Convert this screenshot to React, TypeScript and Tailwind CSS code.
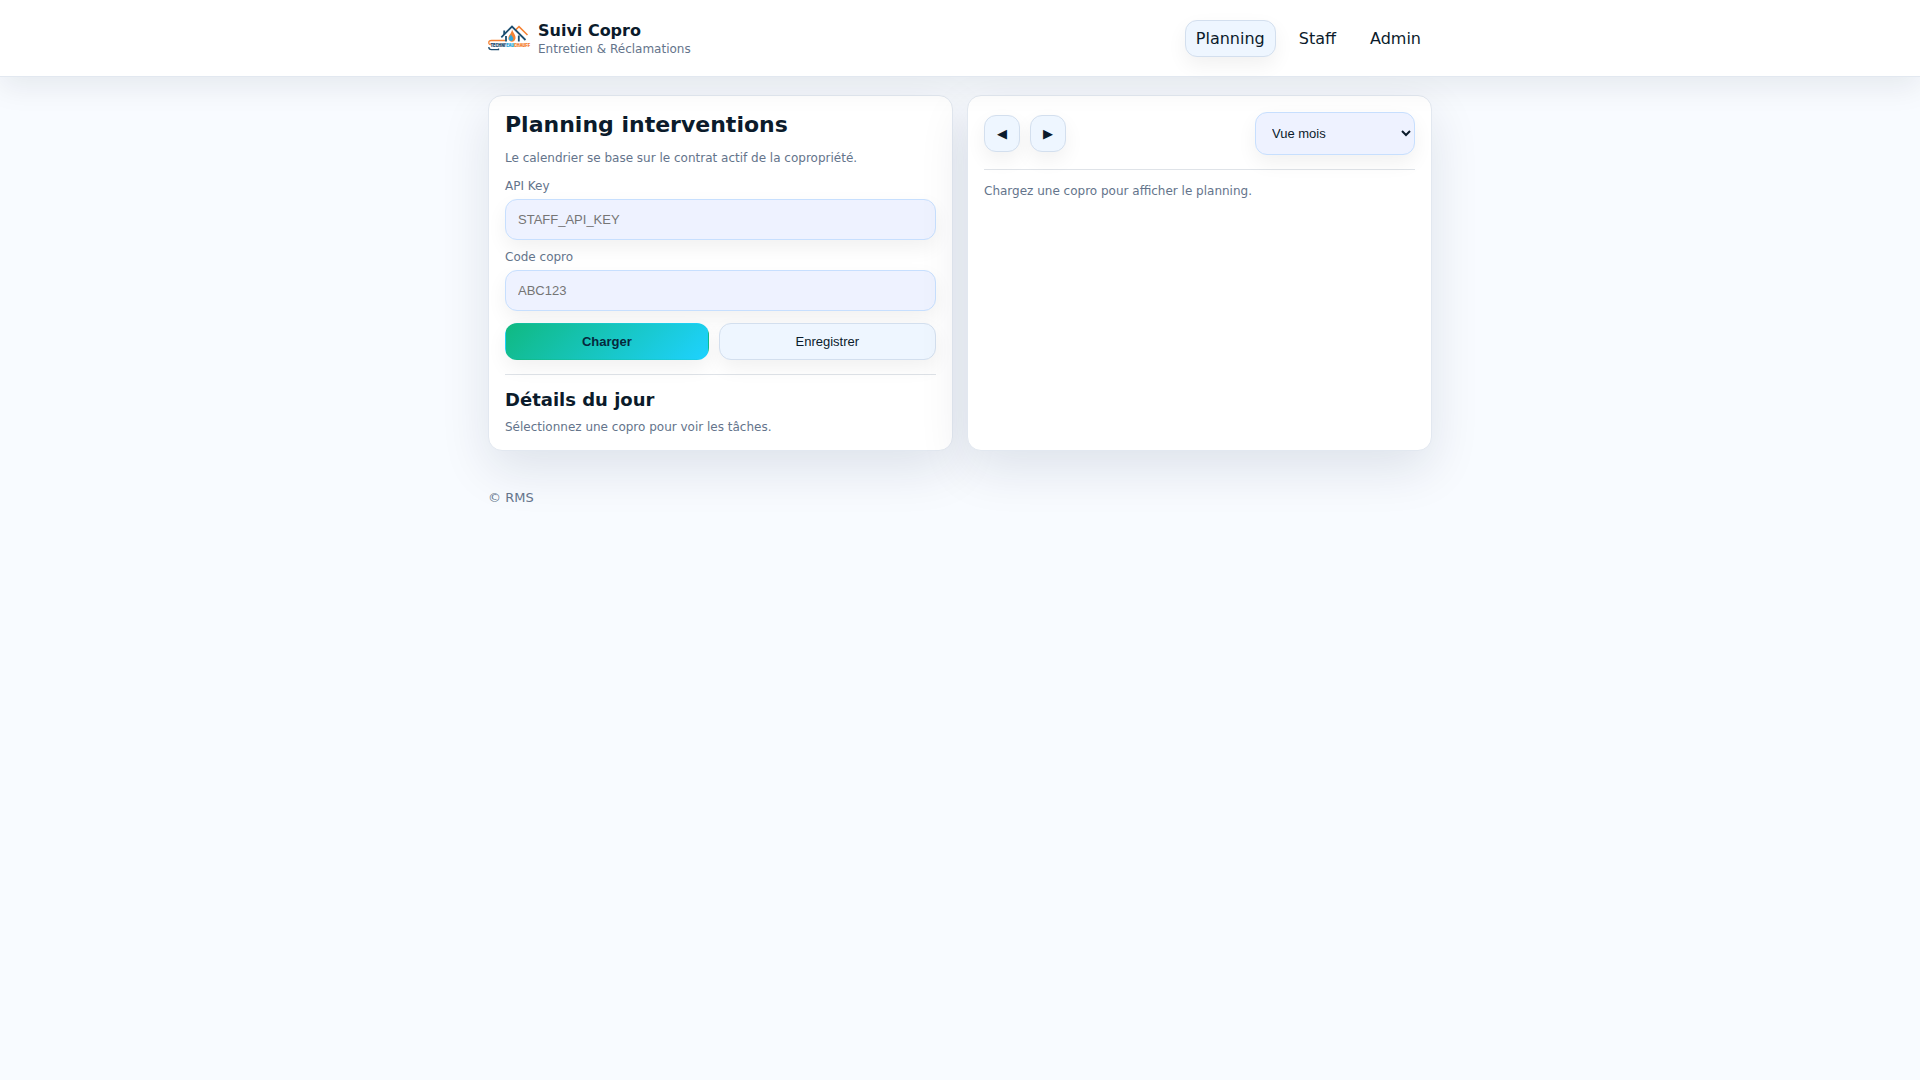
import { useState } from 'react';
import type { ReactNode } from 'react';

type View = 'month' | 'week' | 'day';

const NAV_ITEMS = [
  { label: 'Planning', href: '#planning', active: true },
  { label: 'Staff', href: '#staff', active: false },
  { label: 'Admin', href: '#admin', active: false },
];

const CONTROL =
  "rounded-xl border border-[#c7dffe] bg-[#eef2ff] px-3 font-['Liberation_Sans',sans-serif] text-[13px] shadow-[0_8px_20px_rgba(2,6,23,0.06)]";

const BUTTON =
  "h-[37px] cursor-pointer rounded-xl border px-3 font-['Liberation_Sans',sans-serif] text-[13px] shadow-[0_8px_20px_rgba(2,6,23,0.06)]";

function Logo() {
  return (
    <svg viewBox="0 0 40 40" className="h-10 w-10 overflow-visible" role="img" aria-label="Techni'eau Chauff">
      <g fill="none" strokeLinejoin="miter">
        <path d="M27.5 12 31 8.600l8.500 8.400" stroke="#f58233" strokeWidth="1.500" />
        <path d="M13.300 19.300 24 8.600 37.500 22" stroke="#1d4e70" strokeWidth="1.800" />
        <path d="M16.200 12.500v4M18 18v5.500M30.800 17.500v6" stroke="#1d4e70" strokeWidth="1.800" />
        <path d="M17 22.500H3.500Q.8 22.500.8 24.600t2 2" stroke="#f58233" strokeWidth="1.300" />
        <path d="M.8 29Q.8 31.600 3.500 31.600H10.500V30.500" stroke="#1d4e70" strokeWidth="1.300" />
      </g>
      <path d="M24 11.500c1 3 4 5.500 3.500 9-.4 2-1.900 3.300-3.500 3.300s-3.700-1.300-3.600-3.800c.1-2.900 3.300-4.500 3.600-8.500z" fill="#f58233" />
      <path d="M23 16c.4 2.400 2.700 3 2.200 5.200-.3 1.200-1.200 1.800-2.200 1.800s-2.300-.9-2.200-2.500c.1-1.700 1.900-2.500 2.200-4.500z" fill="#32a9dc" />
      <text
        x="2.500"
        y="29.300"
        fontFamily="'Liberation Sans Narrow', 'Roboto Condensed', 'Liberation Sans', sans-serif"
        fontWeight="bold"
        fontSize="4.800"
        strokeWidth="0.200"
      >
        <tspan fill="#1d4e70" stroke="#1d4e70">TECHNI'</tspan>
        <tspan fill="#32a9dc" stroke="#32a9dc">EAU</tspan>
        <tspan fill="#f58233" stroke="#f58233">CHAUFF</tspan>
      </text>
    </svg>
  );
}

function Card({ children }: { children: ReactNode }) {
  return (
    <section className="rounded-[14px] border border-[#e2e8f0] bg-white p-4 shadow-[0_18px_50px_rgba(2,24,60,0.11)]">
      {children}
    </section>
  );
}

export default function App() {
  const [apiKey, setApiKey] = useState('');
  const [code, setCode] = useState('');
  const [view, setView] = useState<View>('month');

  return (
    <div className="min-h-screen bg-[#f8fbff] font-['DejaVu_Sans',sans-serif] text-base text-[#0b1b2b]">
      <header className="sticky top-0 z-10 border-b border-[#e2e8f0] bg-white shadow-[0_10px_30px_rgba(15,23,42,0.08)]">
        <div className="mx-auto flex max-w-[980px] items-center justify-between p-[18px]">
          <div className="flex items-center gap-2.5">
            <Logo />
            <div className="flex flex-col gap-0.5">
              <div className="leading-[19px] font-bold">Suivi Copro</div>
              <div className="text-xs leading-[14px] text-[#64748b]">Entretien &amp; Réclamations</div>
            </div>
          </div>

          <nav className="flex gap-3">
            {NAV_ITEMS.map((item) => (
              <a
                key={item.label}
                href={item.href}
                className={`rounded-xl border px-2.5 py-2 leading-[19px] ${
                  item.active
                    ? 'border-[#d3dfee] bg-[#eef6ff] shadow-[0_8px_20px_rgba(2,6,23,0.06)]'
                    : 'border-transparent'
                }`}
              >
                {item.label}
              </a>
            ))}
          </nav>
        </div>
      </header>

      <main className="mx-auto grid max-w-[980px] grid-cols-1 gap-3.5 p-[18px] md:grid-cols-2">
        <Card>
          <h1 className="text-[22px] leading-[26px] font-bold">Planning interventions</h1>
          <p className="mt-[13px] text-xs leading-[14px] text-[#64748b]">
            Le calendrier se base sur le contrat actif de la copropriété.
          </p>

          <label htmlFor="api-key" className="mt-3.5 mb-1.5 block text-xs leading-[14px] text-[#64748b]">
            API Key
          </label>
          <input
            id="api-key"
            value={apiKey}
            onChange={(e) => setApiKey(e.target.value)}
            placeholder="STAFF_API_KEY"
            className={`${CONTROL} h-[41px] w-full placeholder:text-[#757575]`}
          />

          <label htmlFor="code-copro" className="mt-2.5 mb-1.5 block text-xs leading-[14px] text-[#64748b]">
            Code copro
          </label>
          <input
            id="code-copro"
            value={code}
            onChange={(e) => setCode(e.target.value)}
            placeholder="ABC123"
            className={`${CONTROL} h-[41px] w-full placeholder:text-[#757575]`}
          />

          <div className="mt-3 flex gap-2.5">
            <button
              type="button"
              className={`${BUTTON} flex-auto border-transparent bg-[linear-gradient(135deg,#10b981,#1ed2ff)] font-bold text-[#06283d]`}
            >
              Charger
            </button>
            <button type="button" className={`${BUTTON} flex-auto border-[#d3dfee] bg-[#eef6ff]`}>
              Enregistrer
            </button>
          </div>

          <hr className="my-3.5 border-[#dfe3e8]" />

          <h2 className="text-lg leading-[21px] font-bold">Détails du jour</h2>
          <p className="mt-2.5 text-xs leading-[14px] text-[#64748b]">
            Sélectionnez une copro pour voir les tâches.
          </p>
        </Card>

        <Card>
          <div className="flex items-center justify-between">
            <div className="flex gap-2.5">
              <button type="button" aria-label="Précédent" className={`${BUTTON} border-[#d3dfee] bg-[#eef6ff]`}>
                ◀
              </button>
              <button type="button" aria-label="Suivant" className={`${BUTTON} border-[#d3dfee] bg-[#eef6ff]`}>
                ▶
              </button>
            </div>
            <select
              aria-label="Vue"
              value={view}
              onChange={(e) => setView(e.target.value as View)}
              className={`${CONTROL} h-[43px] w-40`}
            >
              <option value="month">Vue mois</option>
              <option value="week">Vue semaine</option>
              <option value="day">Vue jour</option>
            </select>
          </div>

          <hr className="my-3.5 border-[#dfe3e8]" />

          <p className="text-xs leading-[14px] text-[#64748b]">Chargez une copro pour afficher le planning.</p>
        </Card>
      </main>

      <footer className="mx-auto max-w-[980px] px-[18px] py-[21px] text-[13px] leading-[15px] text-[#64748b]">
        © RMS
      </footer>
    </div>
  );
}
